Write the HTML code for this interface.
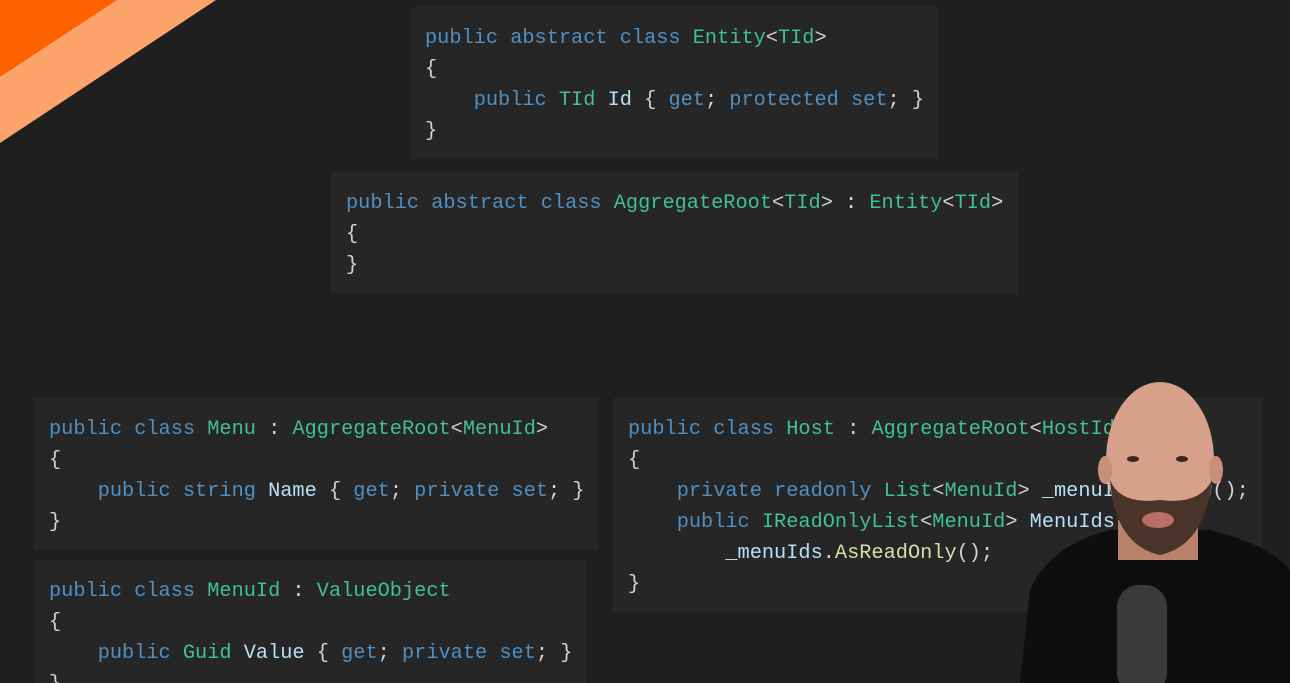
<!DOCTYPE html>
<html><head><meta charset="utf-8"><style>
html,body{margin:0;padding:0;width:1290px;height:683px;overflow:hidden}
body{background:#1f1f1f;position:relative;font-family:"Liberation Mono","DejaVu Sans Mono",monospace}
.box{position:absolute;background:#262626}
pre{position:absolute;margin:0;font-family:"Liberation Mono","DejaVu Sans Mono",monospace;font-size:20.3px;line-height:31px;color:#d4d4d4;white-space:pre}
.k{color:#4f8fc2}.t{color:#3fbf9b}.i{color:#b8e0f5}.m{color:#dcdcaa}
</style></head><body>
<svg width="1290" height="683" style="position:absolute;left:0;top:0">
<polygon points="0,0 216,0 0,143" fill="#fda46c"/>
<polygon points="0,0 117,0 0,77" fill="#fe6200"/>
</svg>
<div class="box" style="left:410px;top:7px;width:528px;height:152px"></div>
<div class="box" style="left:331px;top:172px;width:687px;height:122px"></div>
<div class="box" style="left:34px;top:398px;width:564px;height:152px"></div>
<div class="box" style="left:613px;top:398px;width:650px;height:214px"></div>
<div class="box" style="left:34px;top:560px;width:551px;height:130px"></div>
<pre style="left:425px;top:23px"><span class="k">public abstract class</span> <span class="t">Entity</span>&lt;<span class="t">TId</span>&gt;
{
    <span class="k">public</span> <span class="t">TId</span> <span class="i">Id</span> { <span class="k">get</span>; <span class="k">protected set</span>; }
}</pre>
<pre style="left:346px;top:188px"><span class="k">public abstract class</span> <span class="t">AggregateRoot</span>&lt;<span class="t">TId</span>&gt; : <span class="t">Entity</span>&lt;<span class="t">TId</span>&gt;
{
}</pre>
<pre style="left:49px;top:414px"><span class="k">public class</span> <span class="t">Menu</span> : <span class="t">AggregateRoot</span>&lt;<span class="t">MenuId</span>&gt;
{
    <span class="k">public string</span> <span class="i">Name</span> { <span class="k">get</span>; <span class="k">private set</span>; }
}</pre>
<pre style="left:628px;top:414px"><span class="k">public class</span> <span class="t">Host</span> : <span class="t">AggregateRoot</span>&lt;<span class="t">HostId</span>&gt;
{
    <span class="k">private readonly</span> <span class="t">List</span>&lt;<span class="t">MenuId</span>&gt; <span class="i">_menuIds</span> = <span class="k">new</span>();
    <span class="k">public</span> <span class="t">IReadOnlyList</span>&lt;<span class="t">MenuId</span>&gt; <span class="i">MenuIds</span> =&gt;
        <span class="i">_menuIds</span>.<span class="m">AsReadOnly</span>();
}</pre>
<pre style="left:49px;top:576px"><span class="k">public class</span> <span class="t">MenuId</span> : <span class="t">ValueObject</span>
{
    <span class="k">public</span> <span class="t">Guid</span> <span class="i">Value</span> { <span class="k">get</span>; <span class="k">private set</span>; }
}</pre>
<svg width="1290" height="683" style="position:absolute;left:0;top:0">
<path d="M1020,683 L1030,590 Q1050,545 1110,530 L1210,530 Q1270,545 1290,570 L1290,683 Z" fill="#0e0e0e"/>
<rect x="1118" y="520" width="80" height="40" fill="#b9806a"/>
<ellipse cx="1160" cy="460" rx="54" ry="78" fill="#d6a08a"/>
<ellipse cx="1105" cy="470" rx="7" ry="14" fill="#c98e78"/>
<ellipse cx="1216" cy="470" rx="7" ry="14" fill="#c98e78"/>
<path d="M1110,480 Q1115,545 1160,555 Q1205,545 1212,480 Q1200,505 1160,500 Q1120,505 1110,480 Z" fill="#4a3328"/>
<ellipse cx="1158" cy="520" rx="16" ry="8" fill="#b86e66"/>
<ellipse cx="1133" cy="459" rx="6" ry="3" fill="#3a2820"/>
<ellipse cx="1182" cy="459" rx="6" ry="3" fill="#3a2820"/>
<rect x="1117" y="585" width="50" height="110" rx="22" fill="#3a3a3a"/>
</svg>
</body></html>
